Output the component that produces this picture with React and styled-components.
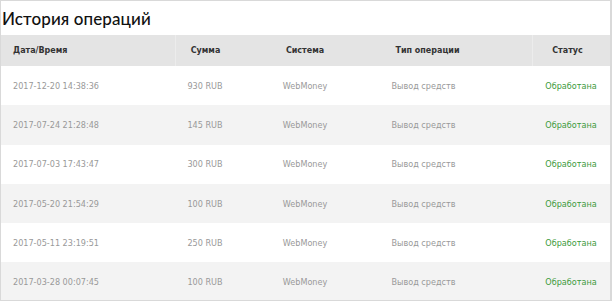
import React from "react";
import styled, { createGlobalStyle } from "styled-components";

const GlobalStyle = createGlobalStyle`
  html, body {
    margin: 0;
    padding: 0;
    background: #fff;
  }
`;

const Panel = styled.section`
  box-sizing: border-box;
  width: 612px;
  height: 301px;
  border: 1px solid #d9d9d9;
  border-right-width: 2px;
  background: #fff;
  overflow: hidden;
`;

const Title = styled.h2`
  margin: 0;
  height: 33px;
  display: flex;
  align-items: center;
  padding-left: 1px;
  padding-top: 1px;
  font-family: "Lato", "Open Sans", sans-serif;
  font-weight: 500;
  font-size: 17px;
  letter-spacing: 0.1px;
  color: #111;
`;

const Grid = styled.div`
  display: grid;
  grid-template-columns: 174px 60px 140px 157px 78px;
`;

const Row = styled.div`
  display: contents;
`;

const Cell = styled.div`
  box-sizing: border-box;
  height: ${(p) => (p.$head ? "31px" : "39.3px")};
  display: flex;
  align-items: center;
  justify-content: ${(p) => (p.$left ? "flex-start" : "center")};
  padding-left: ${(p) => (p.$left ? "12px" : "0")};
  padding-right: ${(p) => p.$pr || 0}px;
  background: ${(p) => (p.$head ? "#e4e4e4" : p.$odd ? "#f3f3f3" : "#fff")};
  border-left: ${(p) => (p.$sep ? "1px solid #ececec" : "none")};
  font-family: "DejaVu Sans", Verdana, sans-serif;
  font-size: ${(p) => (p.$head ? "8px" : "8.1px")};
  font-weight: ${(p) => (p.$head ? 700 : 400)};
  color: ${(p) => (p.$head ? "#333" : p.$ok ? "#3c9a3c" : "#999")};
  white-space: nowrap;
`;

const rows = [
  ["2017-12-20 14:38:36", "930 RUB"],
  ["2017-07-24 21:28:48", "145 RUB"],
  ["2017-07-03 17:43:47", "300 RUB"],
  ["2017-05-20 21:54:29", "100 RUB"],
  ["2017-05-11 23:19:51", "250 RUB"],
  ["2017-03-28 00:07:45", "100 RUB"],
];

export default function App() {
  return (
    <>
      <GlobalStyle />
      <Panel>
        <Title>История операций</Title>
        <Grid>
          <Row>
            <Cell $head $left>Дата/Время</Cell>
            <Cell $head $sep>Сумма</Cell>
            <Cell $head>Система</Cell>
            <Cell $head $pr={52}>Тип операции</Cell>
            <Cell $head $sep $pr={8}>Статус</Cell>
          </Row>
          {rows.map(([date, sum], i) => (
            <Row key={date}>
              <Cell $left $odd={i % 2 === 1}>{date}</Cell>
              <Cell $odd={i % 2 === 1}>{sum}</Cell>
              <Cell $odd={i % 2 === 1}>WebMoney</Cell>
              <Cell $odd={i % 2 === 1} $pr={60}>Вывод средств</Cell>
              <Cell $odd={i % 2 === 1} $ok>Обработана</Cell>
            </Row>
          ))}
        </Grid>
      </Panel>
    </>
  );
}
